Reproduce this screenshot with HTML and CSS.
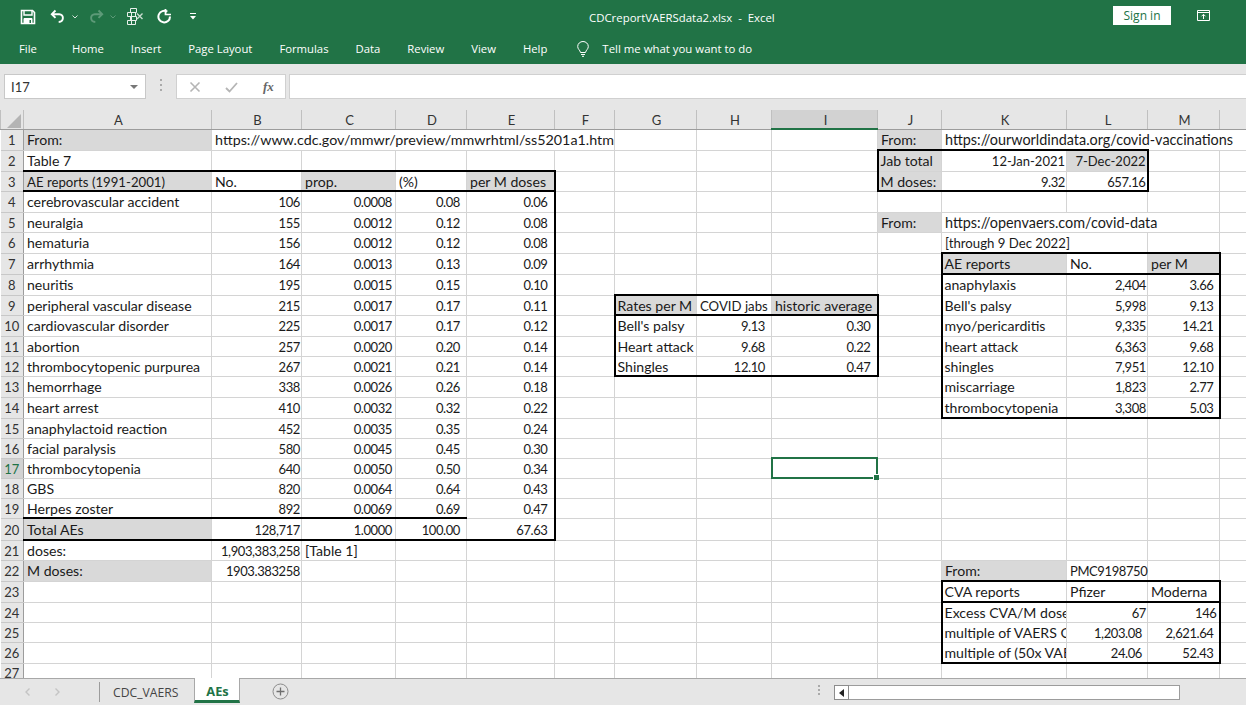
FILE: index.html
```html
<!DOCTYPE html>
<html lang="en">
<head>
<meta charset="utf-8">
<title>CDCreportVAERSdata2.xlsx - Excel</title>
<link rel="stylesheet" href="styles.css">
</head>
<body>
<div class="app">
  <header class="ribbon">
    <div class="titlebar">
      <div class="qat">
        <svg class="qi" width="16" height="16" viewBox="0 0 16 16"><path d="M1.500 1.500h11l2 2v11h-13z" fill="none" stroke="#fff" stroke-width="1.600"/><path d="M4 2v4h8V2" fill="none" stroke="#fff" stroke-width="1.400"/><path d="M4 14.500V9.500h8v5" fill="#fff" stroke="#fff"/><rect x="9.500" y="11" width="1.500" height="3" fill="#217346"/></svg>
        <svg class="qi undo" width="15" height="15" viewBox="0 0 15 15"><path d="M5.500 1.500 1.800 5.200l3.700 3.700M2.200 5.200h7c5 0 5 7.500-.5 7.800" fill="none" stroke="#fff" stroke-width="1.900"/></svg>
        <svg class="qi drop" width="6" height="4" viewBox="0 0 6 4"><path d="M.5.500 3 3 5.500.5" fill="none" stroke="#d6e4db"/></svg>
        <svg class="qi redo" width="15" height="15" viewBox="0 0 15 15"><path d="M9.500 1.500l3.700 3.700-3.700 3.700M12.800 5.200h-7c-5 0-5 7.500.5 7.800" fill="none" stroke="#5d9a78" stroke-width="1.900"/></svg>
        <svg class="qi drop drop2" width="6" height="4" viewBox="0 0 6 4"><path d="M.5.500 3 3 5.500.5" fill="none" stroke="#5d9a78"/></svg>
        <svg class="qi form" width="17" height="18" viewBox="0 0 17 18"><path d="M3.500.5h6v4h-6zM.5 4.500h8v4h-8zM3.500 8.500h6v4h-6zM.5 12.500h8v4h-8zM4.500 4.500v12" fill="none" stroke="#e8f0eb"/><path d="M10 5.500l5.500 5.500M15.500 5.500 10 11" stroke="#c9dcd0" stroke-width="1.400"/></svg>
        <svg class="qi again" width="15" height="15" viewBox="0 0 15 15"><path d="M10.300 2.700A5.800 5.800 0 1 0 13 7.500" fill="none" stroke="#fff" stroke-width="2"/><path d="M8.500 0v5.500H14" fill="none" stroke="#fff" stroke-width="1.700"/></svg>
        <svg class="qi custom" width="6" height="7" viewBox="0 0 6 7"><path d="M0 .5h6" stroke="#fff"/><path d="M0 3h6L3 6.500z" fill="#fff"/></svg>
      </div>
      <div class="doc-title">CDCreportVAERSdata2.xlsx&nbsp; - &nbsp;Excel</div>
      <div class="win-actions">
        <button class="signin">Sign in</button>
        <svg class="display" width="13" height="11" viewBox="0 0 13 11"><path d="M.5.500h12v10H.500zM.5 2.500h12" fill="none" stroke="#fff"/><path d="M6.500 9V4.500M4.500 6.300l2-2 2 2" fill="none" stroke="#fff"/></svg>
      </div>
    </div>
    <nav class="tabs">
      <span class="tab file">File</span>
      <span class="tab">Home</span>
      <span class="tab">Insert</span>
      <span class="tab">Page Layout</span>
      <span class="tab">Formulas</span>
      <span class="tab">Data</span>
      <span class="tab">Review</span>
      <span class="tab">View</span>
      <span class="tab">Help</span>
      <svg class="bulb" width="12" height="16" viewBox="0 0 12 16"><path d="M3.500 11.500C3 9 .7 8.200.7 5.500a5.300 5 0 0 1 10.600 0c0 2.700-2.300 3.500-2.800 6zM4 13.500h4M5 15.300h2" fill="none" stroke="#fff"/></svg>
      <span class="tell">Tell me what you want to do</span>
    </nav>
  </header>

  <div class="formula-row">
    <div class="namebox"><span>I17</span><i class="caret"></i></div>
    <div class="grip"></div>
    <div class="fx-box">
      <svg width="12" height="12" viewBox="0 0 12 12"><path d="M1.500 1.500l9 9M10.500 1.500l-9 9" stroke="#b5b5b5" stroke-width="1.600"/></svg>
      <svg width="13" height="12" viewBox="0 0 13 12"><path d="M1 7l3.500 3.500L12 2" fill="none" stroke="#b5b5b5" stroke-width="1.800"/></svg>
      <span class="fx">fx</span>
    </div>
    <div class="formula-input"></div>
  </div>

  <main class="sheet">
    <table class="grid">
      <colgroup>
        <col class="c-hdr"><col class="c-a"><col class="c-b"><col class="c-c"><col class="c-d"><col class="c-e"><col class="c-f"><col class="c-g"><col class="c-h"><col class="c-i"><col class="c-j"><col class="c-k"><col class="c-l"><col class="c-m"><col class="c-n">
      </colgroup>
      <thead>
        <tr class="h19">
          <th class="corner"><svg width="14" height="14" viewBox="0 0 14 14"><path d="M14 0v14H0z" fill="#b4b4b4"/></svg></th>
          <th>A</th><th>B</th><th>C</th><th>D</th><th>E</th><th>F</th><th>G</th><th>H</th><th class="sel">I</th><th>J</th><th>K</th><th>L</th><th>M</th><th class="last"></th>
        </tr>
      </thead>
      <tbody>
        <tr class="h21"><th>1</th><td class="g">From:</td><td colspan="5" class="url-a">https://www.cdc.gov/mmwr/preview/mmwrhtml/ss5201a1.htm</td><td></td><td></td><td></td><td class="g">From:</td><td colspan="4" class="url">https://ourworldindata.org/covid-vaccinations</td></tr>
        <tr class="h21"><th>2</th><td class="bb">Table 7</td><td class="bb"></td><td class="bb"></td><td class="bb"></td><td class="bb"></td><td></td><td></td><td></td><td></td><td class="g bl bt">Jab total</td><td class="n date p1 bt">12-Jan-2021</td><td class="g n date p1 bt br">7-Dec-2022</td><td></td><td></td></tr>
        <tr class="h20"><th>3</th><td class="g bb tight">AE reports (1991-2001)</td><td class="bb">No.</td><td class="g bb">prop.</td><td class="bb">(%)</td><td class="g bb br">per M doses</td><td></td><td></td><td></td><td></td><td class="g bl bb">M doses:</td><td class="n p1 bb">9.32</td><td class="n p1 bb br">657.16</td><td></td><td></td></tr>
        <tr class="h21"><th>4</th><td>cerebrovascular accident</td><td class="n p1">106</td><td class="n p3">0.0008</td><td class="n p6">0.08</td><td class="n p6 br">0.06</td><td></td><td></td><td></td><td></td><td></td><td></td><td></td><td></td><td></td></tr>
        <tr class="h20"><th>5</th><td>neuralgia</td><td class="n p1">155</td><td class="n p3">0.0012</td><td class="n p6">0.12</td><td class="n p6 br">0.08</td><td></td><td></td><td></td><td></td><td class="g">From:</td><td colspan="3" class="url">https://openvaers.com/covid-data</td><td></td></tr>
        <tr class="h21"><th>6</th><td>hematuria</td><td class="n p1">156</td><td class="n p3">0.0012</td><td class="n p6">0.12</td><td class="n p6 br">0.08</td><td></td><td></td><td></td><td></td><td></td><td colspan="2" class="tight">[through 9 Dec 2022]</td><td></td><td></td></tr>
        <tr class="h21"><th>7</th><td>arrhythmia</td><td class="n p1">164</td><td class="n p3">0.0013</td><td class="n p6">0.13</td><td class="n p6 br">0.09</td><td></td><td></td><td></td><td></td><td></td><td class="g bt bl bb">AE reports</td><td class="bt bb">No.</td><td class="g bt bb br">per M</td><td></td></tr>
        <tr class="h21"><th>8</th><td>neuritis</td><td class="n p1">195</td><td class="n p3">0.0015</td><td class="n p6">0.15</td><td class="n p6 br">0.10</td><td></td><td class="bb"></td><td class="bb"></td><td class="bb"></td><td></td><td class="bl">anaphylaxis</td><td class="n p1">2,404</td><td class="n p5 br">3.66</td><td></td></tr>
        <tr class="h20"><th>9</th><td>peripheral vascular disease</td><td class="n p1">215</td><td class="n p3">0.0017</td><td class="n p6">0.17</td><td class="n p6 br">0.11</td><td></td><td class="g bl bb">Rates per M</td><td class="bb tight">COVID jabs</td><td class="g bb br">historic average</td><td></td><td class="bl">Bell's palsy</td><td class="n p1">5,998</td><td class="n p5 br">9.13</td><td></td></tr>
        <tr class="h21"><th>10</th><td>cardiovascular disorder</td><td class="n p1">225</td><td class="n p3">0.0017</td><td class="n p6">0.17</td><td class="n p6 br">0.12</td><td></td><td class="bl">Bell's palsy</td><td class="n p6">9.13</td><td class="n p6 br">0.30</td><td></td><td class="bl">myo/pericarditis</td><td class="n p1">9,335</td><td class="n p5 br">14.21</td><td></td></tr>
        <tr class="h20"><th>11</th><td>abortion</td><td class="n p1">257</td><td class="n p3">0.0020</td><td class="n p6">0.20</td><td class="n p6 br">0.14</td><td></td><td class="bl">Heart attack</td><td class="n p6">9.68</td><td class="n p6 br">0.22</td><td></td><td class="bl">heart attack</td><td class="n p1">6,363</td><td class="n p5 br">9.68</td><td></td></tr>
        <tr class="h20"><th>12</th><td>thrombocytopenic purpurea</td><td class="n p1">267</td><td class="n p3">0.0021</td><td class="n p6">0.21</td><td class="n p6 br">0.14</td><td></td><td class="bl bb">Shingles</td><td class="n p6 bb">12.10</td><td class="n p6 bb br">0.47</td><td></td><td class="bl">shingles</td><td class="n p1">7,951</td><td class="n p5 br">12.10</td><td></td></tr>
        <tr class="h21"><th>13</th><td>hemorrhage</td><td class="n p1">338</td><td class="n p3">0.0026</td><td class="n p6">0.26</td><td class="n p6 br">0.18</td><td></td><td></td><td></td><td></td><td></td><td class="bl">miscarriage</td><td class="n p1">1,823</td><td class="n p5 br">2.77</td><td></td></tr>
        <tr class="h21"><th>14</th><td>heart arrest</td><td class="n p1">410</td><td class="n p3">0.0032</td><td class="n p6">0.32</td><td class="n p6 br">0.22</td><td></td><td></td><td></td><td></td><td></td><td class="bl bb">thrombocytopenia</td><td class="n p1 bb">3,308</td><td class="n p5 bb br">5.03</td><td></td></tr>
        <tr class="h20"><th>15</th><td>anaphylactoid reaction</td><td class="n p1">452</td><td class="n p3">0.0035</td><td class="n p6">0.35</td><td class="n p6 br">0.24</td><td></td><td></td><td></td><td></td><td></td><td></td><td></td><td></td><td></td></tr>
        <tr class="h20"><th>16</th><td>facial paralysis</td><td class="n p1">580</td><td class="n p3">0.0045</td><td class="n p6">0.45</td><td class="n p6 br">0.30</td><td></td><td></td><td></td><td></td><td></td><td></td><td></td><td></td><td></td></tr>
        <tr class="h20"><th class="sel-row">17</th><td>thrombocytopenia</td><td class="n p1">640</td><td class="n p3">0.0050</td><td class="n p6">0.50</td><td class="n p6 br">0.34</td><td></td><td></td><td></td><td class="active"><span class="cursor"></span></td><td></td><td></td><td></td><td></td><td></td></tr>
        <tr class="h20"><th>18</th><td>GBS</td><td class="n p1">820</td><td class="n p3">0.0064</td><td class="n p6">0.64</td><td class="n p6 br">0.43</td><td></td><td></td><td></td><td></td><td></td><td></td><td></td><td></td><td></td></tr>
        <tr class="h20"><th>19</th><td class="bb">Herpes zoster</td><td class="n p1 bb">892</td><td class="n p3 bb">0.0069</td><td class="n p6 bb">0.69</td><td class="n p6 br">0.47</td><td></td><td></td><td></td><td></td><td></td><td></td><td></td><td></td><td></td></tr>
        <tr class="h22"><th>20</th><td class="g bb">Total AEs</td><td class="n p1 bb">128,717</td><td class="n p3 bb">1.0000</td><td class="n p6 bb">100.00</td><td class="n p6 bb br">67.63</td><td></td><td></td><td></td><td></td><td></td><td></td><td></td><td></td><td></td></tr>
        <tr class="h20"><th>21</th><td>doses:</td><td class="n p1">1,903,383,258</td><td>[Table 1]</td><td></td><td></td><td></td><td></td><td></td><td></td><td></td><td></td><td></td><td></td><td></td></tr>
        <tr class="h21"><th>22</th><td class="g">M doses:</td><td class="n p1">1903.383258</td><td></td><td></td><td></td><td></td><td></td><td></td><td></td><td></td><td class="g bb">From:</td><td class="bb num-text">PMC9198750</td><td class="bb"></td><td></td></tr>
        <tr class="h21"><th>23</th><td></td><td></td><td></td><td></td><td></td><td></td><td></td><td></td><td></td><td></td><td class="bl bb">CVA reports</td><td class="bb">Pfizer</td><td class="bb br">Moderna</td><td></td></tr>
        <tr class="h20"><th>24</th><td></td><td></td><td></td><td></td><td></td><td></td><td></td><td></td><td></td><td></td><td class="bl clip">Excess CVA/M doses</td><td class="n p1">67</td><td class="n p2 br">146</td><td></td></tr>
        <tr class="h20"><th>25</th><td></td><td></td><td></td><td></td><td></td><td></td><td></td><td></td><td></td><td></td><td class="bl clip">multiple of VAERS CVA</td><td class="n p5">1,203.08</td><td class="n p5 br">2,621.64</td><td></td></tr>
        <tr class="h21"><th>26</th><td></td><td></td><td></td><td></td><td></td><td></td><td></td><td></td><td></td><td></td><td class="bl bb clip">multiple of (50x VAERS</td><td class="n p5 bb">24.06</td><td class="n p5 bb br">52.43</td><td></td></tr>
        <tr class="h20"><th>27</th><td></td><td></td><td></td><td></td><td></td><td></td><td></td><td></td><td></td><td></td><td></td><td></td><td></td><td></td></tr>
      </tbody>
    </table>
  </main>

  <footer class="statusbar">
    <div class="sheet-nav">
      <svg width="5" height="8" viewBox="0 0 5 8"><path d="M4.500.5 1 4l3.500 3.500" fill="none" stroke="#c4c4c4" stroke-width="1.400"/></svg>
      <svg width="5" height="8" viewBox="0 0 5 8"><path d="M.5.500 4 4 .5 7.500" fill="none" stroke="#c4c4c4" stroke-width="1.400"/></svg>
    </div>
    <span class="tab-sep"></span>
    <span class="sheet-tab">CDC_VAERS</span>
    <span class="sheet-tab active-tab">AEs</span>
    <svg class="add" width="17" height="17" viewBox="0 0 17 17"><circle cx="8.500" cy="8.500" r="7.500" fill="none" stroke="#8c8c8c"/><path d="M8.500 4.500v8M4.500 8.500h8" stroke="#6e6e6e" stroke-width="1.300"/></svg>
    <span class="split-grip"></span>
    <div class="hscroll">
      <button class="scroll-btn"><i class="left-arrow"></i></button>
      <div class="scroll-thumb"></div>
    </div>
  </footer>
</div>
</body>
</html>
```
FILE: styles.css
```css
* { box-sizing: border-box; }
html, body { margin: 0; padding: 0; }
body { font-family: "Open Sans", "Liberation Sans", sans-serif; overflow: hidden; }
.app { width: 1246px; height: 705px; display: flex; flex-direction: column; background: #e6e6e6; overflow: hidden; }

.ribbon { height: 64px; background: #217346; color: #fff; flex: none; }
.titlebar { height: 33px; display: flex; align-items: center; }
.qat { width: 589px; display: flex; align-items: center; padding-left: 20px; flex: none; }
.qi { display: block; flex: none; }
.undo { margin-left: 14px; }
.qat .drop { margin-left: 7px; }
.qat .drop2 { margin-left: 6px; }
.redo { margin-left: 11px; }
.form { margin-left: 11px; }
.again { margin-left: 13px; }
.custom { margin-left: 18px; }
.doc-title { flex: 1; font-size: 11.400px; padding-top: 1px; }
.win-actions { display: flex; align-items: center; width: 133px; flex: none; }
.signin { width: 58px; height: 19px; margin-bottom: 2px; background: #fff; color: #217346; border: 0; padding: 0; font: 12px "Open Sans", sans-serif; }
.display { margin: 0 0 2px 26px; }
.tabs { height: 31px; display: flex; align-items: center; padding-left: 19px; font-size: 11.300px; gap: 27px; }
.tab.file { margin-right: 8px; }
.bulb { margin-left: 3px; margin-right: -14px; }
.tell { font-size: 11.400px; }

.formula-row { height: 46px; flex: none; display: flex; align-items: flex-start; padding: 10px 0 0 4px; background: #e6e6e6; }
.namebox { width: 142px; height: 25px; background: #fff; border: 1px solid #c8c8c8; display: flex; align-items: center; justify-content: space-between; padding: 0 7px 0 6px; font: 13px "Lato", sans-serif; color: #333; }
.caret { width: 0; height: 0; border: 4px solid transparent; border-top: 4px solid #777; border-bottom: 0; }
.grip { width: 2px; height: 14px; margin: 5px 14px 0 14px; background: repeating-linear-gradient(#aaa 0 2px, transparent 2px 5px); }
.fx-box { width: 110px; height: 25px; background: #fff; border: 1px solid #d0d0d0; display: flex; align-items: center; padding-left: 12px; gap: 24px; }
.fx { font: italic 700 13px "Liberation Serif", serif; color: #666; margin-left: 1px; }
.formula-input { flex: 1; height: 25px; margin-left: 3px; background: #fff; border: 1px solid #d0d0d0; border-right: 0; }

.sheet { height: 568px; flex: none; overflow: hidden; background: #fff; }
.grid { border-collapse: collapse; table-layout: fixed; width: 1246px; font: 14.100px/1 "Lato", sans-serif; color: #1a1a1a; }
.c-hdr { width: 23px; } .c-a { width: 188px; } .c-b { width: 90px; } .c-c { width: 94px; } .c-d { width: 71px; } .c-e { width: 88px; } .c-f { width: 60px; } .c-g { width: 82px; } .c-h { width: 75px; } .c-i { width: 106px; } .c-j { width: 64px; } .c-k { width: 125px; } .c-l { width: 81px; } .c-m { width: 72px; } .c-n { width: 27px; }
.h19 { height: 19px; } .h20 { height: 20px; } .h21 { height: 21px; } .h22 { height: 22px; }

th { background: #e6e6e6; font-weight: 400; font-size: 13px; color: #333; padding: 3px 0 0; border: 1px solid #c0c0c0; border-top: 0; text-align: center; vertical-align: baseline; }
thead th { padding: 2px 0 0 2px; vertical-align: middle; border-bottom: 1px solid #9c9c9c; border-top: 0; }
thead th.corner { text-align: right; vertical-align: bottom; line-height: 0; padding: 0 2px 1px 0; }
thead th.sel { background: #d2d2d2; border-bottom: 2px solid #217346; }
th.sel-row { color: #217346; background: #d2d2d2; }
tbody th { border-left: 0; border-bottom: 1px solid #c8c8c8; border-right: 1px solid #9c9c9c; }
td { padding: 3px 0 0 3px; border: 1px solid #d4d4d4; white-space: nowrap; overflow: visible; background: #fff; vertical-align: baseline; }
.h22 td, .h22 th { padding-top: 4px; }
.g { background: #d9d9d9; }
.n { text-align: right; font-size: 13px; letter-spacing: -.4px; }
.n.date { letter-spacing: 0; }
.url { font-size: 14.400px; }
.url-a { font-size: 14.300px; }
.tight { font-size: 13.200px; }
.num-text { font-size: 13px; letter-spacing: -.4px; }
.p1 { padding-right: 1px; } .p2 { padding-right: 2px; } .p3 { padding-right: 3px; } .p5 { padding-right: 5px; } .p6 { padding-right: 6px; }
.bb { border-bottom: 2px solid #000; }
.bt { border-top: 2px solid #000; }
.bl { border-left: 2px solid #000; padding-left: 2px; }
.br { border-right: 2px solid #000; }
.clip { overflow: hidden; }
.active { position: relative; }
.cursor { position: absolute; inset: -2px -1px -1px -1px; border: 2px solid #217346; }
.cursor::after { content: ""; position: absolute; right: -3px; bottom: -3px; width: 5px; height: 5px; background: #217346; border: 1px solid #fff; border-width: 1px 0 0 1px; }

.statusbar { flex: 1; display: flex; align-items: flex-start; border-top: 1px solid #a8a8a8; font-size: 12.200px; color: #444; position: relative; }
.sheet-nav { display: flex; gap: 25px; width: 99px; padding: 9px 0 0 25px; }
.tab-sep { width: 1px; height: 20px; margin-top: 3px; background: #9c9c9c; }
.sheet-tab { padding: 5px 13px 0; height: 25px; }
.sheet-tab.active-tab { margin-left: 3px; padding: 4px 0 0; width: 46px; text-align: center; background: #fff; color: #217346; font-size: 12.800px; font-weight: 700; border: 1px solid #a8a8a8; border-top: 0; border-bottom: 3px solid #217346; margin-top: -1px; }
.add { margin: 4px 0 0 32px; }
.split-grip { width: 2px; height: 12px; margin: 6px 0 0 529px; background: repeating-linear-gradient(#aaa 0 2px, transparent 2px 4px); }
.hscroll { display: flex; margin: 6px 0 0 14px; height: 15px; }
.scroll-btn { width: 15px; height: 15px; background: #fff; border: 1px solid #8c8c8c; padding: 0; display: flex; align-items: center; justify-content: center; }
.left-arrow { width: 0; height: 0; border: 4px solid transparent; border-right: 5px solid #222; border-left: 0; }
.scroll-thumb { width: 331px; height: 15px; background: #fff; border: 1px solid #9c9c9c; border-left: 0; }
```
